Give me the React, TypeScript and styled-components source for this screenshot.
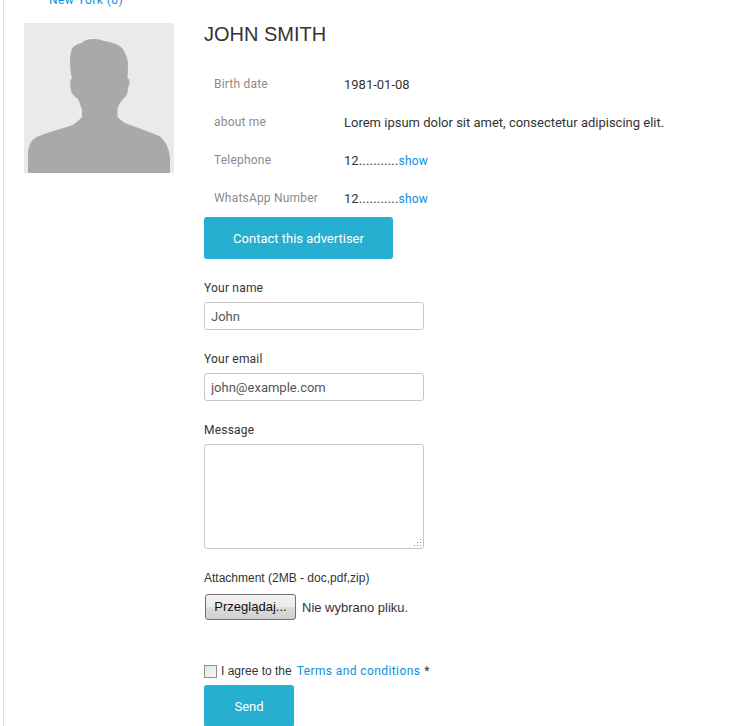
import React from 'react'
import styled, { createGlobalStyle } from 'styled-components'

const GlobalStyle = createGlobalStyle`
  html, body {
    margin: 0;
    padding: 0;
    background: #fff;
    overflow: hidden;
  }
  body {
    font-family: Roboto, "Liberation Sans", sans-serif;
    font-size: 12px;
    color: #333;
  }
`

const Page = styled.div`
  width: 730px;
  height: 726px;
  box-sizing: border-box;
  border-left: 1px solid #dcdcdc;
  margin-left: 3px;
  overflow: hidden;
`

const TopLink = styled.a`
  display: block;
  height: 4px;
  margin-left: 45px;
  line-height: 0;
  font-size: 12px;
  letter-spacing: 0.45px;
  color: #0d8fdc;
`

const Profile = styled.div`
  display: flex;
  margin: 19px 0 0 20px;
`

const Avatar = styled.svg`
  width: 150px;
  height: 150px;
  display: block;
  flex-shrink: 0;
`

const Details = styled.div`
  margin-left: 30px;
  width: 500px;
`

const Name = styled.h1`
  margin: 1px 0 0;
  height: 21px;
  font-family: "Liberation Sans", Arial, sans-serif;
  font-size: 20px;
  line-height: 21px;
  font-weight: 400;
  color: #333;
`

const InfoTable = styled.div`
  margin: 21px 0 -1px;
`

const InfoRow = styled.div`
  display: flex;
  box-sizing: border-box;
  height: 38px;
  align-items: center;
  padding: 0 0 2px 10px;
`

const InfoLabel = styled.div`
  width: 130px;
  flex-shrink: 0;
  color: #8b8b8b;
  letter-spacing: 0.2px;
`

const InfoValue = styled.div`
  font-size: 13px;
  color: #333;
`

const Dots = styled.span`
  letter-spacing: 0.2px;
`

const BlueLink = styled.a`
  color: #0d8fdc;
`

const ShowLink = styled(BlueLink)`
  font-size: 12px;
  letter-spacing: 0.2px;
`

const ActionButton = styled.button<{ $width: number; $height: number }>`
  display: block;
  width: ${p => p.$width}px;
  height: ${p => p.$height}px;
  border: 0;
  border-radius: 3px;
  background: #26afd0;
  color: #fff;
  font-family: Roboto, "Liberation Sans", sans-serif;
  font-size: 13px;
  padding: 0;
`

const Field = styled.div<{ $top: number }>`
  margin-top: ${p => p.$top}px;
`

const FieldLabel = styled.div`
  height: 15px;
  line-height: 15px;
  color: #333;
  letter-spacing: 0.2px;
`

const TextInput = styled.input`
  display: block;
  box-sizing: border-box;
  width: 220px;
  height: 28px;
  margin-top: 6px;
  padding: 0 6px;
  border: 1px solid #c6c6c6;
  border-radius: 3px;
  font-family: Roboto, "Liberation Sans", sans-serif;
  font-size: 13px;
  color: #555;
  outline: none;
`

const MessageWrap = styled.div`
  position: relative;
  width: 220px;
  height: 105px;
  margin-top: 6px;
`

const MessageBox = styled.textarea`
  display: block;
  box-sizing: border-box;
  width: 100%;
  height: 100%;
  border: 1px solid #c6c6c6;
  border-radius: 3px;
  outline: none;
  resize: none;
`

const ResizeGrip = styled.svg`
  position: absolute;
  right: 2px;
  bottom: 2px;
  width: 9px;
  height: 9px;
`

const AttachmentLabel = styled.div`
  height: 14px;
  line-height: 14px;
  font-family: "Liberation Sans", Arial, sans-serif;
  font-size: 12px;
  color: #333;
`

const FileRow = styled.div`
  display: flex;
  align-items: center;
  margin: 9px 0 0 1px;
  font-family: "Liberation Sans", Arial, sans-serif;
  font-size: 13px;
`

const FileButton = styled.div`
  box-sizing: border-box;
  width: 91px;
  height: 26px;
  line-height: 24px;
  text-align: center;
  border: 1px solid #707070;
  border-radius: 3px;
  background: linear-gradient(#f2f2f2 0%, #ebebeb 50%, #dddddd 51%, #cfcfcf 100%);
  color: #111;
`

const FileStatus = styled.span`
  margin-left: 6px;
  color: #333;
`

const AgreeRow = styled.div`
  display: flex;
  align-items: center;
  height: 16px;
  margin-top: 43px;
`

const CheckBox = styled.span`
  box-sizing: border-box;
  width: 13px;
  height: 13px;
  border: 1px solid #8e8e8e;
  background: linear-gradient(135deg, #e4e4e4, #f6f6f6);
  margin-right: 4px;
`

const AgreeText = styled.span`
  font-family: "Liberation Sans", Arial, sans-serif;
  font-size: 12px;
  color: #333;
  margin-right: 5px;
`

const TermsLink = styled(BlueLink)`
  letter-spacing: 0.4px;
`

const Required = styled.span`
  margin-left: 4px;
  color: #333;
`

const SendWrap = styled.div`
  margin-top: 6px;
`

const gripDots = [
  [7, 1],
  [4, 4],
  [7, 4],
  [1, 7],
  [4, 7],
  [7, 7],
]

export default function App() {
  return (
    <Page>
      <GlobalStyle />
      <TopLink>New York (0)</TopLink>
      <Profile>
        <Avatar viewBox="0 0 150 150">
          <rect width="150" height="150" fill="#eaeaea" />
          <path
            fill="#a9a9a9"
            d="M4 150 L4 129 C5 122 7 118 10 116 C13 113 16 113 20 111 L49 102 C52 100 55 97 58 94 L58 87 C56 81 55 77 53 75 C49 73 47 69 46.500 65 C46 61 46 59 46.500 57 L48 55 C46 47 45 36 47.500 27 C49 23 53 21 58 20 C60 17 64 16 70 16 C75 16 79 18 83 18.500 C90 20 95 22 98 25 C102 30 104 36 104 42 L103.500 55 L105.500 57 C105.500 60 105 63 104 65 C104 70 102 74 100 75 C97 78 95 82 93.500 85 L93.500 94 C96 96 99 99 101 100 L133 112 C136 113 138 115 139 117 C143 121 145 127 146 134 L146 150 Z"
          />
        </Avatar>
        <Details>
          <Name>JOHN SMITH</Name>
          <InfoTable>
            <InfoRow>
              <InfoLabel>Birth date</InfoLabel>
              <InfoValue>1981-01-08</InfoValue>
            </InfoRow>
            <InfoRow>
              <InfoLabel>about me</InfoLabel>
              <InfoValue>Lorem ipsum dolor sit amet, consectetur adipiscing elit.</InfoValue>
            </InfoRow>
            <InfoRow>
              <InfoLabel>Telephone</InfoLabel>
              <InfoValue>12<Dots>...........</Dots><ShowLink>show</ShowLink></InfoValue>
            </InfoRow>
            <InfoRow>
              <InfoLabel>WhatsApp Number</InfoLabel>
              <InfoValue>12<Dots>...........</Dots><ShowLink>show</ShowLink></InfoValue>
            </InfoRow>
          </InfoTable>
          <ActionButton $width={189} $height={42}>Contact this advertiser</ActionButton>
          <Field $top={22}>
            <FieldLabel>Your name</FieldLabel>
            <TextInput defaultValue="John" />
          </Field>
          <Field $top={22}>
            <FieldLabel>Your email</FieldLabel>
            <TextInput defaultValue="john@example.com" />
          </Field>
          <Field $top={22}>
            <FieldLabel>Message</FieldLabel>
            <MessageWrap>
              <MessageBox />
              <ResizeGrip viewBox="0 0 9 9">
                {gripDots.map(([x, y]) => (
                  <rect key={`${x}-${y}`} x={x} y={y} width="1" height="1" fill="#8a8a8a" />
                ))}
              </ResizeGrip>
            </MessageWrap>
          </Field>
          <Field $top={22}>
            <AttachmentLabel>Attachment (2MB - doc,pdf,zip)</AttachmentLabel>
            <FileRow>
              <FileButton>Przeglądaj...</FileButton>
              <FileStatus>Nie wybrano pliku.</FileStatus>
            </FileRow>
          </Field>
          <AgreeRow>
            <CheckBox />
            <AgreeText>I agree to the</AgreeText>
            <TermsLink>Terms and conditions</TermsLink>
            <Required>*</Required>
          </AgreeRow>
          <SendWrap>
            <ActionButton $width={90} $height={42}>Send</ActionButton>
          </SendWrap>
        </Details>
      </Profile>
    </Page>
  )
}
